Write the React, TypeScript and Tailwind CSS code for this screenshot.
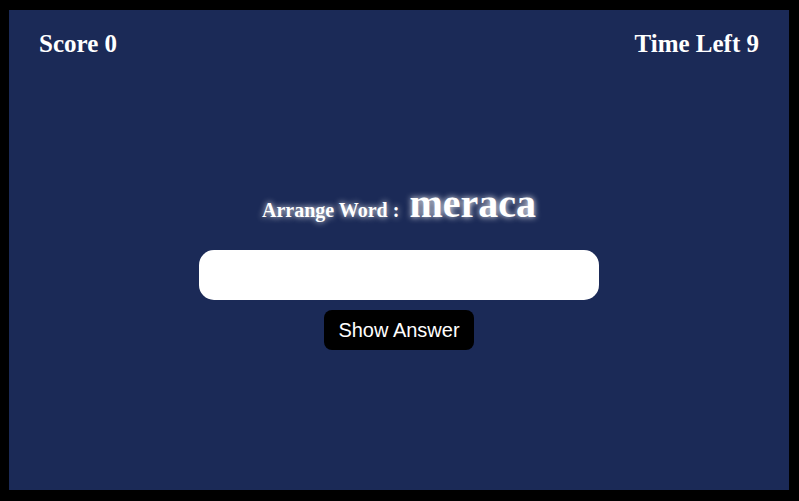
import React from "react";

export default function App() {
  return (
    <div className="w-[799px] h-[501px] bg-black pt-[10px] pl-[9px] pr-[10px] pb-[11px]">
      <div className="w-full h-full bg-[#1b2a57] flex flex-col" style={{ fontFamily: '"Liberation Serif", "Times New Roman", serif' }}>
        <div className="flex justify-between px-[30px] pt-[20px] text-white font-bold text-[25px] leading-[28px]">
          <span>Score 0</span>
          <span>Time Left 9</span>
        </div>
        <div className="flex flex-col items-center mt-[123px]">
          <div className="flex items-baseline justify-center text-white font-bold [text-shadow:0_0_6px_#ffffff]">
            <span className="text-[20px] leading-[46px]">Arrange Word :</span>
            <span className="text-[40px] leading-[46px] ml-[10px]">meraca</span>
          </div>
          <input
            type="text"
            className="mt-[17px] w-[400px] h-[50px] bg-white rounded-[15px] outline-none border-0 px-4"
          />
          <button
            className="mt-[10px] h-[40px] px-[14px] bg-black text-white rounded-[8px] text-[20px]"
            style={{ fontFamily: '"Liberation Sans", Arial, sans-serif' }}
          >
            Show Answer
          </button>
        </div>
      </div>
    </div>
  );
}
